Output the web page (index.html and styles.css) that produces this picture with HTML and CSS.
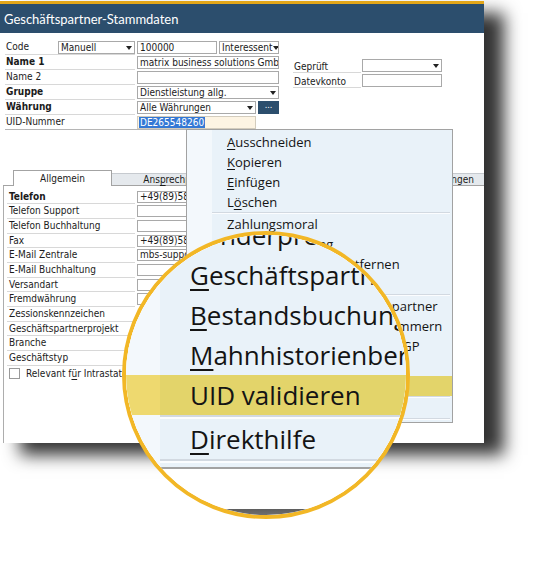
FILE: index.html
```html
<!DOCTYPE html>
<html lang="de">
<head>
<meta charset="utf-8">
<title>Geschäftspartner-Stammdaten</title>
<link rel="stylesheet" href="styles.css">
</head>
<body>
<div class="stage">
  <div class="window">
    <div class="titlebar">Geschäftspartner-Stammdaten</div>
    <div class="head">
      <div class="form-left">
        <div class="row">
          <div class="lbl">Code<div class="box sel w-manuell">Manuell<i class="arr"></i></div></div>
          <div class="val">
            <div class="box w-num">100000</div>
            <div class="box sel w-type">Interessent<i class="arr"></i></div>
          </div>
        </div>
        <div class="row">
          <div class="lbl b">Name 1</div>
          <div class="val"><div class="box w-full">matrix business solutions GmbH</div></div>
        </div>
        <div class="row">
          <div class="lbl">Name 2</div>
          <div class="val"><div class="box w-full"></div></div>
        </div>
        <div class="row">
          <div class="lbl b">Gruppe</div>
          <div class="val"><div class="box sel w-full">Dienstleistung allg.<i class="arr"></i></div></div>
        </div>
        <div class="row">
          <div class="lbl b">Währung</div>
          <div class="val"><div class="box sel w-cur">Alle Währungen<i class="arr"></i></div><div class="btn-dots">...</div></div>
        </div>
        <div class="row row-last">
          <div class="lbl">UID-Nummer</div>
          <div class="val"><div class="box w-cur uid"><span class="selected">DE265548260</span></div></div>
        </div>
      </div>
      <div class="form-right">
        <div class="row">
          <div class="rlbl">Geprüft</div>
          <div class="box sel w-right">&nbsp;<i class="arr"></i></div>
        </div>
        <div class="row">
          <div class="rlbl">Datevkonto</div>
          <div class="box w-right"></div>
        </div>
      </div>
    </div>

    <div class="tabs">
      <div class="tab-lead"></div>
      <div class="tab active">Allgemein</div>
      <div class="tab t2">Ans<u>p</u>rechpartner</div>
      <div class="tab t-last">Zahlungsbedingungen</div>
    </div>

    <div class="panel">
      <div class="prow"><div class="plbl b">Telefon</div><div class="pbox">+49(89)589956-0</div></div>
      <div class="prow"><div class="plbl">Telefon Support</div><div class="pbox"></div></div>
      <div class="prow"><div class="plbl">Telefon Buchhaltung</div><div class="pbox"></div></div>
      <div class="prow"><div class="plbl">Fax</div><div class="pbox">+49(89)589956-99</div></div>
      <div class="prow"><div class="plbl">E-Mail Zentrale</div><div class="pbox">mbs-support@matrix.de</div></div>
      <div class="prow"><div class="plbl">E-Mail Buchhaltung</div><div class="pbox"></div></div>
      <div class="prow"><div class="plbl">Versandart</div><div class="pbox"></div></div>
      <div class="prow"><div class="plbl">Fremdwährung</div><div class="pbox"></div></div>
      <div class="prow"><div class="plbl">Zessionskennzeichen</div></div>
      <div class="prow"><div class="plbl">Geschäftspartnerprojekt</div></div>
      <div class="prow"><div class="plbl">Branche</div></div>
      <div class="prow"><div class="plbl">Geschäftstyp</div></div>
      <div class="prow check"><span class="cb"></span>Relevant f<u>ü</u>r Intrastat</div>
    </div>
  </div>

  <div class="menu">
    <div class="mi"><u>A</u>usschneiden</div>
    <div class="mi"><u>K</u>opieren</div>
    <div class="mi"><u>E</u>infügen</div>
    <div class="mi">L<u>ö</u>schen</div>
    <div class="msep"></div>
    <div class="mi">Zahlungsmoral</div>
    <div class="mi">Preisbestimmung</div>
    <div class="mi">Projektzuordnung entfernen</div>
    <div class="mi">Aktivitäten</div>
    <div class="msep"></div>
    <div class="mi">Sonderpreise für Geschäftspartner</div>
    <div class="mi"><u>G</u>eschäftspartner-Katalognummern</div>
    <div class="mi"><u>B</u>estandsbuchungen für den GP</div>
    <div class="mi"><u>M</u>ahnhistorienbericht</div>
    <div class="mi hl">UID validieren</div>
    <div class="msep"></div>
    <div class="mi"><u>D</u>irekthilfe</div>
    <div class="msep"></div>
  </div>

  <div class="lens">
    <div class="lens-stage">
      <div class="lens-shadow"></div>
      <div class="menu">
        <div class="mi"><u>A</u>usschneiden</div>
        <div class="mi"><u>K</u>opieren</div>
        <div class="mi"><u>E</u>infügen</div>
        <div class="mi">L<u>ö</u>schen</div>
        <div class="msep"></div>
        <div class="mi">Zahlungsmoral</div>
        <div class="mi">Preisbestimmung</div>
        <div class="mi">Projektzuordnung entfernen</div>
        <div class="mi">Aktivitäten</div>
        <div class="msep"></div>
        <div class="mi">Sonderpreise für Geschäftspartner</div>
        <div class="mi"><u>G</u>eschäftspartner-Katalognummern</div>
        <div class="mi"><u>B</u>estandsbuchungen für den GP</div>
        <div class="mi"><u>M</u>ahnhistorienbericht</div>
        <div class="mi hl">UID validieren</div>
        <div class="msep"></div>
        <div class="mi"><u>D</u>irekthilfe</div>
        <div class="msep"></div>
      </div>
    </div>
  </div>
</div>
</body>
</html>
```

FILE: styles.css
```css
* { box-sizing: border-box; }

html, body {
  margin: 0;
  padding: 0;
  background: #fff;
}

body {
  width: 536px;
  height: 571px;
  overflow: hidden;
  font-family: "DejaVu Sans Condensed", "DejaVu Sans", sans-serif;
  font-size: 10px;
  color: #1b1b1b;
}

.stage {
  position: relative;
  width: 536px;
  height: 571px;
  padding-top: 1px;
}

.window {
  width: 484px;
  height: 442px;
  background: #fff;
  border-top: 3px solid #e3a619;
  box-shadow: 20px 12px 16px rgba(0, 0, 0, 0.8);
  display: flex;
  flex-direction: column;
}

.titlebar {
  height: 29px;
  flex: none;
  background: #2c4e6d;
  color: #fff;
  font-family: "Lato", "Open Sans", sans-serif;
  font-stretch: normal;
  font-size: 13px;
  padding-left: 4px;
  display: flex;
  align-items: center;
}

/* ---------- header form ---------- */
.head {
  margin: 7px 0 0 5px;
  width: 448px;
  display: flex;
  border-bottom: 1px solid #b5b5b5;
  flex: none;
}

.form-left { width: 274px; }

.form-right {
  margin: 18px 0 0 14px;
  width: 149px;
}

.row {
  display: flex;
  height: 15px;
}

.row-last { height: 14px; }

.lbl {
  width: 130px;
  border-bottom: 1px solid #d8d8d8;
  padding-left: 1px;
  display: flex;
  align-items: flex-start;
  line-height: 13px;
  white-space: nowrap;
}

.row-last .lbl { border-bottom: none; }

.b { font-weight: bold; }

.val {
  margin-left: 2px;
  display: flex;
  gap: 2px;
}

.box {
  height: 13px;
  margin-top: 1px;
  border: 1px solid #a9a9a9;
  background: #fff;
  padding: 0 2px;
  line-height: 11px;
  white-space: nowrap;
  overflow: hidden;
  display: flex;
  align-items: center;
  flex: none;
}

.lbl .box { margin-left: auto; }

.w-manuell { width: 77px; }
.w-num { width: 80px; }
.w-type { width: 60px; }
.w-full { width: 142px; }
.w-cur { width: 119px; }
.w-right { width: 80px; margin-left: 1px; }

.arr {
  margin-left: auto;
  width: 0;
  height: 0;
  border-left: 3.5px solid transparent;
  border-right: 3.5px solid transparent;
  border-top: 4px solid #222;
  flex: none;
}

.btn-dots {
  width: 21px;
  height: 13px;
  margin-top: 1px;
  background: #2c4e6d;
  color: #fff;
  font-size: 9px;
  line-height: 9px;
  text-align: center;
  flex: none;
}

.uid {
  background: #fdf4e3;
  border-color: #d3ccbd;
  padding-left: 1px;
}

.selected {
  background: #3478d5;
  color: #fff;
  padding: 0 1px;
  line-height: 11px;
}

.rlbl {
  width: 68px;
  border-bottom: 1px solid #d8d8d8;
  padding: 2px 0 0 1px;
  line-height: 13px;
}

/* ---------- tabs ---------- */
.tabs {
  margin: 40px 0 0 3px;
  display: flex;
  height: 16px;
  flex: none;
}

.tab-lead {
  width: 10px;
  border-bottom: 1px solid #a3a3a3;
}

.tab {
  align-self: flex-end;
  height: 13px;
  background: #e5e9ed;
  border-top: 1px solid #c6cacf;
  border-right: 1px solid #c6cacf;
  border-bottom: 1px solid #a3a3a3;
  line-height: 11px;
  text-align: center;
  white-space: nowrap;
}

.tab.active {
  align-self: stretch;
  height: 16px;
  width: 99px;
  background: #fff;
  border: 1px solid #a3a3a3;
  border-bottom: none;
  line-height: 16px;
}

.tab.t2 { width: 139px; }

.tab.t-last {
  flex: 1;
  text-align: right;
  padding-right: 10px;
  border-right: none;
}

/* ---------- panel ---------- */
.panel {
  flex: 1;
  margin-left: 3px;
  border-left: 1px solid #adadad;
  padding: 3.6px 0 0 3px;
}

.prow {
  display: flex;
  height: 14.7px;
}

.plbl {
  width: 128px;
  border-bottom: 1px solid #d8d8d8;
  padding-left: 2px;
  line-height: 13px;
  white-space: nowrap;
}

.pbox {
  width: 140px;
  height: 12px;
  margin: 1px 0 0 2px;
  border: 1px solid #a9a9a9;
  padding: 0 2px;
  line-height: 10px;
  white-space: nowrap;
  overflow: hidden;
}

.check {
  align-items: center;
  padding-left: 2px;
}

.cb {
  width: 11px;
  height: 11px;
  border: 1px solid #9a9a9a;
  background: #fff;
  margin-right: 6px;
}

u {
  text-decoration: underline;
  text-decoration-thickness: 1px;
  text-underline-offset: 2px;
}

/* ---------- context menu ---------- */
.menu {
  position: absolute;
  left: 186px;
  top: 129px;
  width: 267px;
  border: 1px solid #a2a2a2;
  background: linear-gradient(to right, #f3f8fc 0 25px, #e9f2f9 25px);
  padding: 2px 0;
  font-family: "Open Sans", sans-serif;
  font-stretch: normal;
  font-size: 13px;
  color: #141414;
}

.mi {
  height: 20px;
  line-height: 20px;
  padding-left: 40px;
  white-space: nowrap;
}

.mi.hl {
  background: linear-gradient(to right, #eed96f 0 25px, #e3d46a 25px);
}

.msep {
  height: 2px;
  margin: 0 2px 0 25px;
  border-top: 1px solid #d2d9e1;
  border-bottom: 1px solid #fbfdff;
}

/* ---------- magnifier ---------- */
.lens {
  position: absolute;
  left: 122px;
  top: 231px;
  width: 288px;
  height: 288px;
  border-radius: 50%;
  border: 4px solid #f2b726;
  overflow: hidden;
  background: #fff;
}

.lens-stage {
  position: absolute;
  left: -126px;
  top: -235px;
  width: 536px;
  height: 571px;
  background: #fff;
  transform-origin: 265px 376px;
  transform: translate(1px, -1px) scale(2);
}

.lens-shadow {
  position: absolute;
  left: 0;
  top: 443px;
  width: 536px;
  height: 30px;
  background: linear-gradient(#5e5e5e, #8a8a8a 8px, #fff 30px);
}
```
